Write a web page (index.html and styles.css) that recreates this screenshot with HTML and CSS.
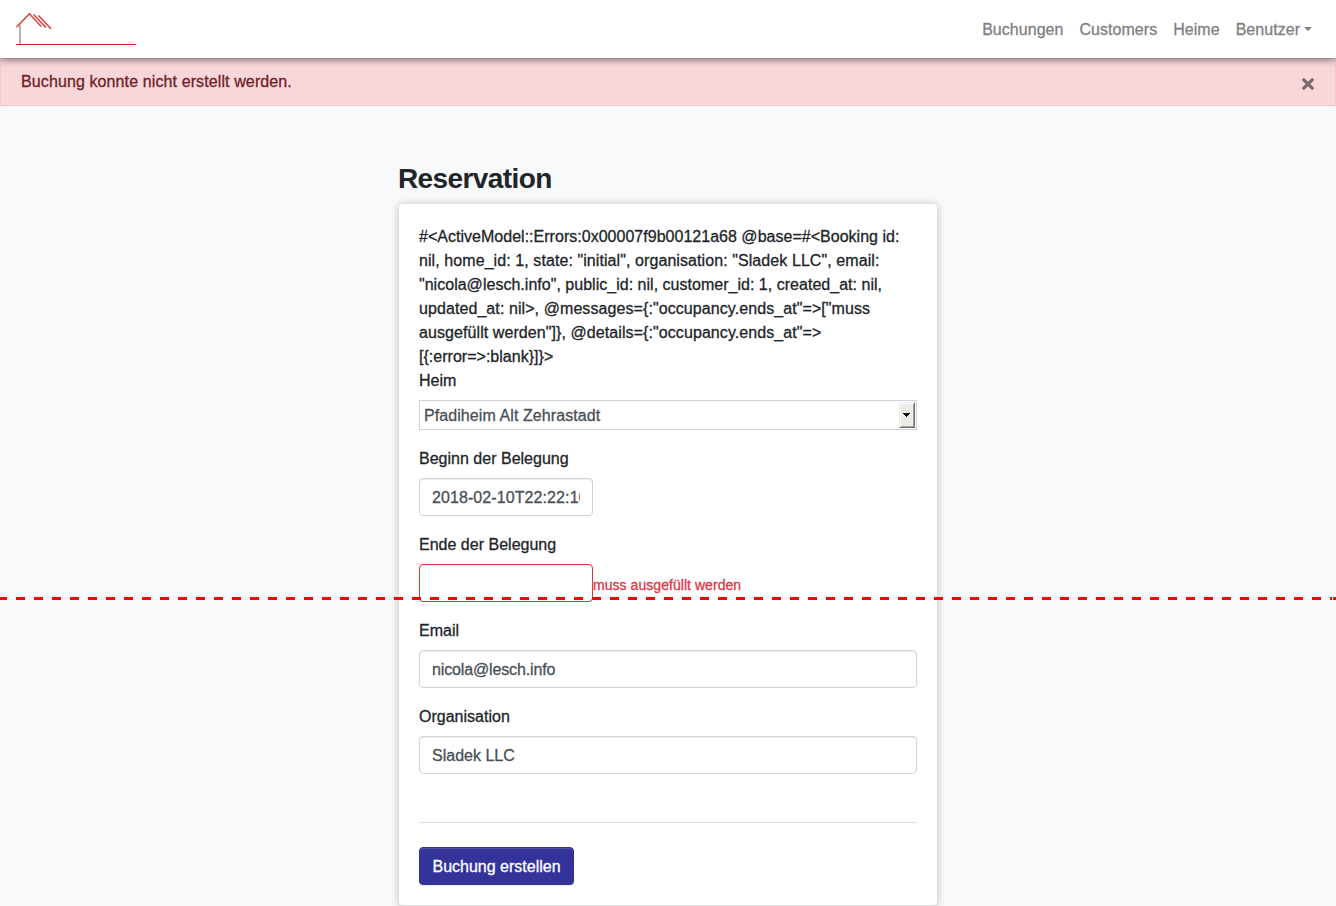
FILE: index.html
```html
<!DOCTYPE html>
<html lang="de">
<head>
<meta charset="utf-8">
<title>Reservation</title>
<link rel="stylesheet" href="styles.css">
</head>
<body>
<nav class="navbar">
  <a class="brand" href="#">
    <svg width="120" height="34" viewBox="0 0 120 34" fill="none">
      <path d="M4 13V32" stroke="#b4b4b4" stroke-width="2"/>
      <path d="M.5 15.2 13.3 1.8 25.3 14.5M17.5 2.5 30 15.5M22.5 3.5 35 16.7" stroke="#d93a35" stroke-width="1.4"/>
      <path d="M0 32.5H120" stroke="#d8201c"/>
    </svg>
  </a>
  <ul class="nav">
    <li><a href="#">Buchungen</a></li>
    <li><a href="#">Customers</a></li>
    <li><a href="#">Heime</a></li>
    <li><a class="dropdown" href="#">Benutzer</a></li>
  </ul>
</nav>
<div class="alert">
  <span>Buchung konnte nicht erstellt werden.</span>
  <button class="close" type="button" aria-label="Close"><svg width="12" height="12" viewBox="0 0 12 12"><path d="M1.8 1.8 10.2 10.2M10.2 1.8 1.8 10.2" stroke="#7c6b6e" stroke-width="3.2" stroke-linecap="round"/></svg></button>
</div>
<main class="container">
  <h1>Reservation</h1>
  <form class="card">
    <div class="errors"><span class="tight">#&lt;ActiveModel::Errors:0x00007f9b00121a68 @base=#&lt;Booking id:</span><br>nil, home_id: 1, state: "initial", organisation: "Sladek LLC", email:<br><span class="tight">"nicola@lesch.info", public_id: nil, customer_id: 1, created_at: nil,</span><br>updated_at: nil&gt;, @messages={:"occupancy.ends_at"=&gt;["muss<br>ausgefüllt werden"]}, @details={:"occupancy.ends_at"=&gt;<br><span class="tight">[{:error=&gt;:blank}]}&gt;</span></div>
    <div class="group">
      <label>Heim</label>
      <div class="select"><span>Pfadiheim Alt Zehrastadt</span><span class="arrow"><svg width="7" height="4" viewBox="0 0 7 4" shape-rendering="crispEdges"><path d="M0 0H7V1H6V2H5V3H4V4H3V3H2V2H1V1H0Z"/></svg></span></div>
    </div>
    <div class="group">
      <label>Beginn der Belegung</label>
      <div class="control short date"><span class="clip">2018-02-10T22:22:16</span></div>
    </div>
    <div class="group">
      <label>Ende der Belegung</label>
      <div class="row"><div class="control short invalid"></div><span class="feedback">muss ausgefüllt werden</span></div>
    </div>
    <div class="group">
      <label>Email</label>
      <div class="control email"><span class="clip">nicola@lesch.info</span></div>
    </div>
    <div class="group">
      <label>Organisation</label>
      <div class="control"><span class="clip">Sladek LLC</span></div>
    </div>
    <hr>
    <button class="submit" type="button">Buchung erstellen</button>
  </form>
</main>
<div class="fold"></div>
</body>
</html>
```
FILE: styles.css
```css
* { box-sizing: border-box; }
body {
  margin: 0;
  height: 906px;
  overflow: hidden;
  background: #f8f9fb;
  color: #212529;
  font: 16px/24px "Liberation Sans", Arial, sans-serif;
  letter-spacing: 0.01px;
  -webkit-text-stroke: 0.3px;
}
.navbar {
  position: relative;
  z-index: 1;
  display: flex;
  justify-content: space-between;
  height: 58px;
  padding: 12px 16px;
  background: #fff;
  box-shadow: 0 1px 8px rgba(0, 0, 0, 0.6);
}
.brand svg { display: block; }
.nav {
  display: flex;
  gap: 16px;
  margin: 0;
  padding: 6px 8px 0 0;
  list-style: none;
  letter-spacing: 0.04px;
}
.nav a { color: #808080; text-decoration: none; }
.dropdown::after {
  content: "";
  display: inline-block;
  margin-left: 4px;
  vertical-align: 4px;
  border: 4px solid transparent;
  border-top-color: #808080;
  border-bottom: 0;
}
.alert {
  display: flex;
  justify-content: space-between;
  height: 48px;
  padding: 11px 20px;
  background: #f8d7da;
  border: 1px solid #f5c6cb;
  color: #721c24;
  letter-spacing: 0.11px;
}
.close {
  height: 12px;
  margin: 8px 1px 0 0;
  padding: 0;
  border: 0;
  background: none;
}
.close svg { display: block; }
.container { width: 540px; margin: 0 auto; padding-top: 56px; }
h1 {
  margin: 0 0 7px;
  font-size: 28px;
  line-height: 34px;
  font-weight: 700;
  letter-spacing: -0.6px;
  -webkit-text-stroke: 0;
}
.card {
  height: 703px;
  padding: 21px 20px 20px;
  background: #fff;
  border: 1px solid #dedfe0;
  border-radius: 4px;
  box-shadow: 0 1px 8px rgba(0, 0, 0, 0.2);
}
.errors { white-space: nowrap; letter-spacing: 0.08px; }
.tight { letter-spacing: 0.02px; }
.group { margin-bottom: 17px; }
label { display: block; margin-bottom: 7px; }
.select {
  display: flex;
  justify-content: space-between;
  height: 30px;
  padding: 1px 1px 1px 4px;
  border: 1px solid #ced4da;
  color: #495057;
  line-height: 27px;
  letter-spacing: 0.08px;
}
.arrow {
  display: flex;
  align-items: center;
  justify-content: center;
  width: 16px;
  height: 26px;
  padding-right: 1px;
  background: #edebe6;
  border: 1px solid;
  border-color: #edebe6 #716a68 #716a68 #edebe6;
  box-shadow: inset 1px 1px #fff, inset -1px -1px #a6a19e;
}
.control {
  height: 38px;
  padding: 7px 12px 0;
  background: #fff;
  border: 1px solid #ced4da;
  border-radius: 4px;
  box-shadow: inset 0 1px 1px rgba(0, 0, 0, 0.075);
  color: #495057;
}
.clip { display: block; overflow: hidden; white-space: nowrap; }
.short { width: 174px; }
.date { letter-spacing: 0.09px; }
.email { letter-spacing: -0.14px; }
.invalid { border-color: #dc3545; }
.row { display: flex; }
.feedback { padding-top: 9px; color: #dc3545; font-size: 14px; letter-spacing: 0.05px; }
hr { margin: 48px 0 24px; border: 0; border-top: 1px solid #dfe0e5; }
.submit {
  display: block;
  width: 155px;
  height: 38px;
  padding: 2px 0 0;
  border: 1px solid #333399;
  border-radius: 4px;
  background: #333399;
  box-shadow: inset 0 1px rgba(255, 255, 255, 0.15), 0 1px 1px rgba(0, 0, 0, 0.075);
  color: #fff;
  font: inherit;
  letter-spacing: 0;
}
.fold {
  position: absolute;
  top: 597px;
  left: 0;
  width: 100%;
  height: 3px;
  background:
    linear-gradient(#f00, #f00) right / 3px 3px no-repeat,
    linear-gradient(#f8f9fb, #f8f9fb) right / 4px 3px no-repeat,
    repeating-linear-gradient(to right, #f00 0 9px, transparent 9px 18px) -2px 0 / 1350px 3px;
}
```
